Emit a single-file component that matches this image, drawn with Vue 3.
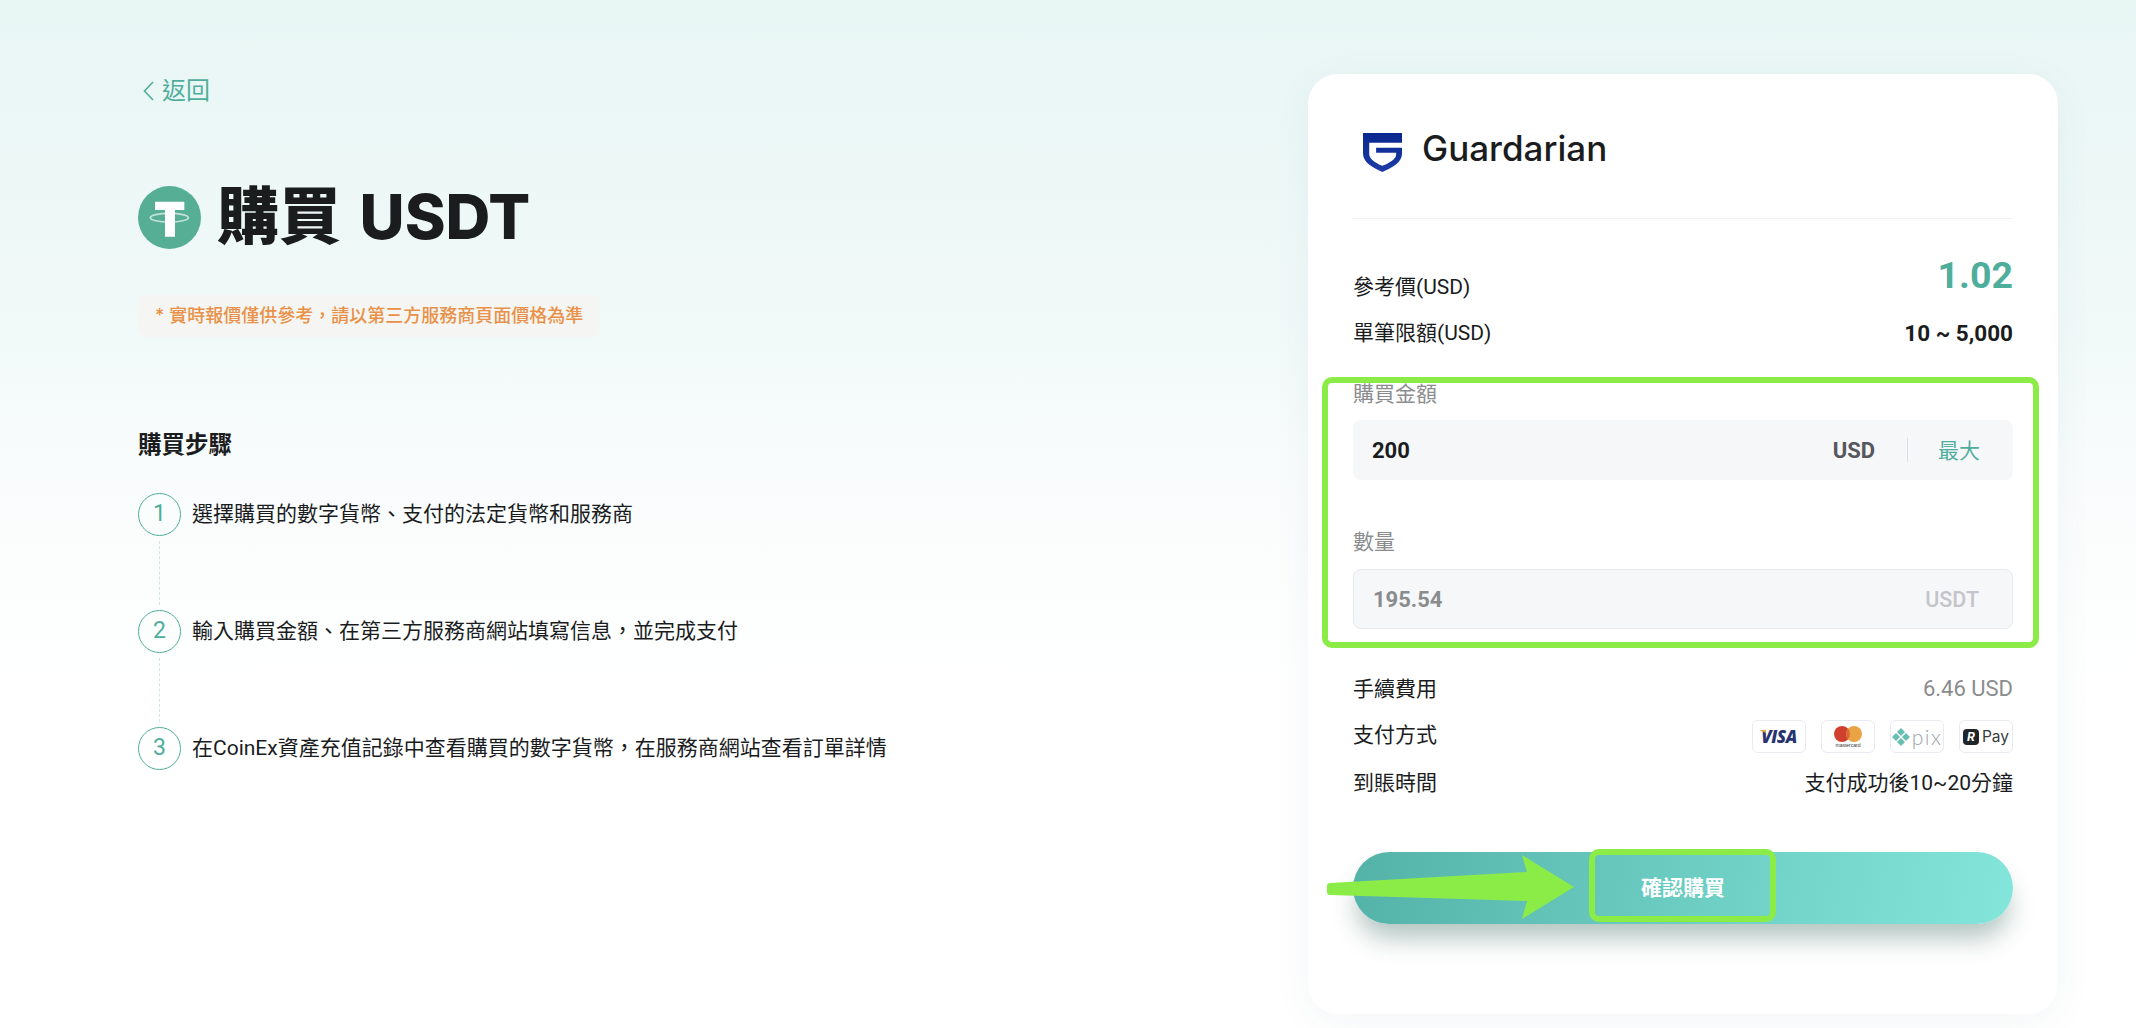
<script setup>
const steps = [
  '選擇購買的數字貨幣、支付的法定貨幣和服務商',
  '輸入購買金額、在第三方服務商網站填寫信息，並完成支付',
  '在CoinEx資產充值記錄中查看購買的數字貨幣，在服務商網站查看訂單詳情'
]
</script>

<template>
  <div class="page">
    <section class="left">
      <a class="back">
        <svg class="chev" width="11" height="20" viewBox="0 0 11 20"><path d="M10 1 L1.5 10 L10 19" fill="none" stroke="#4FAE9B" stroke-width="1.6"/></svg>
        <span>返回</span>
      </a>
      <h1 class="title">
        <svg width="63" height="63" viewBox="0 0 189 189">
          <circle cx="94.5" cy="94.5" r="94.5" fill="#56AE95"/>
          <path d="M51 47H139V72H111V152H81V72H51Z" fill="#fff"/>
          <ellipse cx="94" cy="95" rx="57" ry="13" fill="none" stroke="#fff" stroke-opacity=".65" stroke-width="5"/>
        </svg>
        <span>購買 USDT</span>
      </h1>
      <div class="notice">* 實時報價僅供參考，請以第三方服務商頁面價格為準</div>
      <h2 class="heading">購買步驟</h2>
      <ol class="steps">
        <li v-for="(s, i) in steps" :key="i" class="step">
          <span class="num">{{ i + 1 }}</span>
          <span class="txt">{{ s }}</span>
        </li>
      </ol>
    </section>

    <section class="card">
      <header class="brand">
        <svg width="39" height="39" viewBox="0 0 113 113">
          <defs><linearGradient id="sh" x1="0" y1="0" x2="0" y2="1"><stop offset="0" stop-color="#0A2790"/><stop offset="1" stop-color="#1E3CA5"/></linearGradient></defs>
          <path d="M0 0H113V60C113 85 85 100 56 113C28 100 0 85 0 60Z" fill="url(#sh)"/>
          <path d="M18 28H113V43H38V57H96V62C96 75 78 86 56 95C34 86 18 75 18 60Z" fill="#fff"/>
        </svg>
        <span class="brand-name">Guardarian</span>
      </header>

      <div class="row price-row">
        <span class="lab">參考價(USD)</span>
        <span class="price">1.02</span>
      </div>
      <div class="row limit-row">
        <span class="lab">單筆限額(USD)</span>
        <span class="strong">10 ~ 5,000</span>
      </div>

      <label class="field-label first">購買金額</label>
      <div class="input">
        <span class="val">200</span>
        <span class="unit">USD</span>
        <span class="sep"></span>
        <span class="max">最大</span>
      </div>

      <label class="field-label second">數量</label>
      <div class="input disabled">
        <span class="val">195.54</span>
        <span class="unit">USDT</span>
      </div>

      <div class="row fee-row">
        <span class="lab">手續費用</span>
        <span class="muted">6.46 USD</span>
      </div>
      <div class="row pay-row">
        <span class="lab up">支付方式</span>
        <div class="badges">
          <span class="badge visa"><i class="visa-tip"></i>VISA</span>
          <span class="badge mc">
            <svg width="28" height="16" viewBox="0 0 28 16"><circle cx="8" cy="8" r="8" fill="#D0402F"/><circle cx="20" cy="8" r="8" fill="#E9A345"/><path d="M14 2.7a8 8 0 0 1 0 10.6a8 8 0 0 1 0-10.6Z" fill="#DD6B36"/></svg>
            <small>mastercard</small>
          </span>
          <span class="badge pix">
            <svg width="18" height="18" viewBox="0 0 18 18"><path d="M9 0l4 4-4 4-4-4zM4 5l4 4-4 4-4-4zM14 5l4 4-4 4-4-4zM9 10l4 4-4 4-4-4z" fill="#66BFB0"/></svg>
            <span>pix</span>
          </span>
          <span class="badge rpay"><b>R</b><span>Pay</span></span>
        </div>
      </div>
      <div class="row time-row">
        <span class="lab">到賬時間</span>
        <span>支付成功後10~20分鐘</span>
      </div>

      <button class="buy"><span>確認購買</span></button>

      <div class="mark mark-form"></div>
      <div class="mark mark-btn"></div>
      <svg class="arrow" width="248" height="66" viewBox="0 0 248 66">
        <path d="M3 29L200 18L195 1L247 33L195 65L200 47L3 41Q0 41 0 38V32Q0 29 3 29Z" fill="#8BEC47"/>
      </svg>
    </section>
  </div>
</template>

<style>
html, body { margin: 0; background: #fff; overflow: hidden; }
</style>

<style scoped>
.page {
  box-sizing: border-box;
  width: 2136px;
  height: 1028px;
  display: flex;
  justify-content: space-between;
  padding: 74px 78px 0 138px;
  background: linear-gradient(180deg, #E8F6F4 0%, #F0F9F8 30%, #F9FCFC 46%, #FDFEFE 60%, #fff 68%);
  font-family: Roboto, "Noto Sans CJK TC", sans-serif;
  color: #1A1C1E;
  overflow: hidden;
}
.left { display: flex; flex-direction: column; align-items: flex-start; }
.back { display: flex; align-items: center; gap: 8px; margin: 5px 0 0 5px; height: 24px; color: #4FAE9B; font-size: 24px; line-height: 24px; }
.title { display: flex; align-items: center; gap: 16px; margin: 83px 0 0; height: 63px; font-family: Inter, "Noto Sans CJK TC", sans-serif; font-size: 62px; font-weight: 800; line-height: 63px; word-spacing: 5px; white-space: nowrap; }
.title span { margin-top: -2px; }
.notice { box-sizing: border-box; margin-top: 46px; height: 42px; padding: 0 17px; border-radius: 8px; background: #F5F6F3; color: #E99148; font-family: Inter, "Noto Sans CJK TC", sans-serif; font-size: 18px; font-weight: 500; line-height: 41px; white-space: nowrap; }
.heading { margin: 95px 0 0; font-size: 23.5px; font-weight: 700; line-height: 26px; }
.steps { list-style: none; margin: 35px 0 0; padding: 0; }
.step { position: relative; display: flex; align-items: center; gap: 11px; height: 43px; margin-bottom: 74px; }
.step:not(:last-child)::after { content: ""; position: absolute; left: 21px; top: 48px; height: 64px; border-left: 1px dashed #CFE6E1; }
.num { box-sizing: border-box; flex: none; width: 43px; height: 43px; border: 1px solid #4FAE9B; border-radius: 50%; color: #4FAE9B; font-size: 23px; line-height: 39px; text-align: center; }
.txt { margin-bottom: 6px; font-size: 21px; white-space: nowrap; }

.card { position: relative; box-sizing: border-box; width: 750px; height: 940px; padding: 59px 45px 0; background: #fff; border-radius: 30px; box-shadow: 0 8px 40px rgba(40, 70, 90, .05); font-size: 21px; }
.brand { display: flex; align-items: center; gap: 20px; height: 39px; padding: 0 0 46px 10px; border-bottom: 1px solid #F1F2F3; }
.brand-name { margin-top: -8px; font-family: Inter, sans-serif; font-size: 35px; font-weight: 500; line-height: 39px; }
.row { display: flex; justify-content: space-between; align-items: center; line-height: 26px; white-space: nowrap; }
.price-row { align-items: flex-end; margin-top: 33px; height: 46px; }
.price-row .lab { margin-bottom: -2px; }
.price { color: #4FAE9B; font-size: 37.5px; font-weight: 700; line-height: 46px; }
.limit-row { margin-top: 22px; }
.strong { font-size: 22.5px; font-weight: 700; }
.field-label { display: block; color: #8A8C8E; line-height: 26px; }
.first { margin-top: 35px; }
.second { margin-top: 49px; }
.input { box-sizing: border-box; display: flex; align-items: center; height: 60px; padding: 0 33px 0 19px; margin-top: 13px; border-radius: 8px; background: #F6F7F9; font-size: 22px; }
.second + .input { margin-top: 14px; }
.val { flex: 1; font-weight: 700; }
.unit { color: #55585C; font-weight: 700; }
.sep { width: 1px; height: 24px; margin: 0 30px 0 32px; background: #DDDFE2; }
.max { margin-top: -2px; color: #4FAE9B; font-size: 21px; }
.disabled { border: 1px solid #E8EAEE; }
.disabled .val { color: #8A8C8E; }
.disabled .unit { color: #C3C5CA; font-weight: 500; font-size: 21.5px; }
.fee-row { margin-top: 47px; }
.muted { color: #8A8C8E; font-size: 22px; }
.pay-row { margin-top: 18px; height: 33px; }
.up { margin-top: -3px; }
.time-row { margin-top: 17px; }
.badges { display: flex; gap: 15px; }
.badge { position: relative; box-sizing: border-box; display: flex; align-items: center; justify-content: center; width: 54px; height: 33px; border: 1.5px solid #E9E9F2; border-radius: 6px; background: #fff; overflow: hidden; }
.visa { color: #27346F; font-size: 17px; font-weight: 800; font-style: italic; letter-spacing: -.4px; font-family: "Open Sans", sans-serif; }
.visa-tip { position: absolute; left: 6px; top: 9px; width: 7px; height: 3px; background: #E9A345; clip-path: polygon(0 0, 100% 0, 100% 100%); }
.mc { flex-direction: column; gap: 0; }
.mc small { font-size: 5px; line-height: 5px; color: #333; font-family: "Liberation Sans", sans-serif; margin-top: 1px; }
.pix { gap: 2px; color: #A0A3A5; font-size: 21px; font-weight: 300; font-family: Lato, sans-serif; letter-spacing: 1.5px; line-height: 20px; }
.rpay { gap: 3px; color: #3A3D40; font-size: 15.5px; font-family: Inter, sans-serif; }
.rpay b { width: 16px; height: 16px; border-radius: 4px; background: #1F2529; color: #fff; font-size: 12px; line-height: 16px; text-align: center; font-style: italic; }
.buy { display: block; width: 100%; height: 72px; margin-top: 56px; border: 0; border-radius: 36px; background: linear-gradient(100deg, #54B3A9 0%, #84E6DB 100%); box-shadow: 0 18px 26px -4px rgba(15, 70, 60, .32); color: #fff; font: 700 21px Roboto, "Noto Sans CJK TC", sans-serif; }
.buy span { position: relative; top: -2px; }
.mark { position: absolute; box-sizing: border-box; border: 6px solid #8BEC47; border-radius: 10px; pointer-events: none; }
.mark-form { left: 14px; top: 303px; width: 717px; height: 271px; }
.mark-btn { left: 281px; top: 775px; width: 187px; height: 73px; }
.arrow { position: absolute; left: 19px; top: 780px; }
</style>
